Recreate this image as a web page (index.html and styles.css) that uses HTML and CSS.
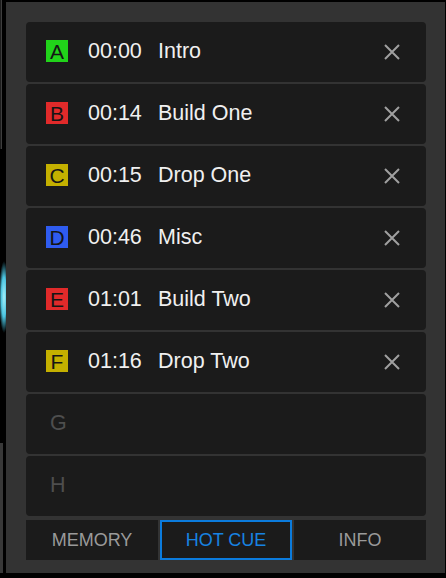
FILE: index.html
```html
<!DOCTYPE html>
<html lang="en">
<head>
  <meta charset="UTF-8">
  <meta name="viewport" content="width=device-width, initial-scale=1.0">
  <title>Hot Cues</title>
  <link rel="stylesheet" href="styles.css">
</head>
<body>
  <div class="stage">
    <div class="edge">
      <div class="edge-top"></div>
      <div class="edge-glow"></div>
      <div class="edge-bottom"></div>
    </div>

    <div class="panel">
      <div class="cue-list">
        <div class="cue">
          <span class="badge green">A</span>
          <span class="time">00:00</span>
          <span class="name">Intro</span>
          <svg class="remove" viewBox="0 0 16 16"><path d="M1 1L15 15M15 1L1 15"/></svg>
        </div>
        <div class="cue">
          <span class="badge red">B</span>
          <span class="time">00:14</span>
          <span class="name">Build One</span>
          <svg class="remove" viewBox="0 0 16 16"><path d="M1 1L15 15M15 1L1 15"/></svg>
        </div>
        <div class="cue">
          <span class="badge yellow">C</span>
          <span class="time">00:15</span>
          <span class="name">Drop One</span>
          <svg class="remove" viewBox="0 0 16 16"><path d="M1 1L15 15M15 1L1 15"/></svg>
        </div>
        <div class="cue">
          <span class="badge blue">D</span>
          <span class="time">00:46</span>
          <span class="name">Misc</span>
          <svg class="remove" viewBox="0 0 16 16"><path d="M1 1L15 15M15 1L1 15"/></svg>
        </div>
        <div class="cue">
          <span class="badge red">E</span>
          <span class="time">01:01</span>
          <span class="name">Build Two</span>
          <svg class="remove" viewBox="0 0 16 16"><path d="M1 1L15 15M15 1L1 15"/></svg>
        </div>
        <div class="cue">
          <span class="badge yellow">F</span>
          <span class="time">01:16</span>
          <span class="name">Drop Two</span>
          <svg class="remove" viewBox="0 0 16 16"><path d="M1 1L15 15M15 1L1 15"/></svg>
        </div>
        <div class="cue empty">
          <span class="slot">G</span>
        </div>
        <div class="cue empty">
          <span class="slot">H</span>
        </div>
      </div>

      <div class="tabs">
        <div class="tab">MEMORY</div>
        <div class="tab active">HOT CUE</div>
        <div class="tab">INFO</div>
      </div>
    </div>
  </div>
</body>
</html>
```

FILE: styles.css
```css
body {
  margin: 0;
  padding: 0;
  background-color: #000;
  font-family: "Liberation Sans", Arial, sans-serif;
  overflow: hidden;
}
.stage {
  display: flex;
  width: 446px;
  height: 578px;
}
.edge {
  width: 6px;
  display: flex;
  flex-direction: column;
}
.edge-top {
  width: 1px;
  height: 149px;
  border-left: 1px solid #1e1e1e;
  background-color: #3e3e3e;
}
.edge-glow {
  margin-top: 111px;
  height: 74px;
  width: 7px;
  background: radial-gradient(ellipse 5px 36px at 4px 50%, #a6f0fa 0%, #4cc4e0 55%, rgba(0, 0, 0, 0) 100%);
}
.edge-bottom {
  margin-top: 109px;
  width: 3px;
  height: 130px;
  background-color: #383838;
}
.panel {
  margin-top: 2px;
  width: 439px;
  height: 571px;
  box-sizing: border-box;
  padding: 20px 19px 13px 20px;
  background-color: #333;
}
.cue-list {
  display: flex;
  flex-direction: column;
  gap: 2px;
}
.cue {
  height: 60px;
  display: flex;
  align-items: center;
  padding: 0 26px 0 20px;
  background-color: #1b1b1b;
  border-radius: 4px;
  font-size: 21.5px;
  color: #f0f0f0;
}
.badge {
  width: 22px;
  height: 22px;
  line-height: 23px;
  margin-bottom: 2px;
  text-align: center;
  font-size: 21px;
  color: #151515;
}
.green { background-color: #21d31a; }
.red { background-color: #e12a2a; }
.yellow { background-color: #c4b000; }
.blue { background-color: #2f5cf0; }
.time {
  margin-left: 20px;
  margin-bottom: 2px;
  width: 70px;
}
.name {
  flex: 1;
  margin-bottom: 2px;
}
.remove {
  width: 16px;
  height: 16px;
  fill: none;
  stroke: #a0a0a0;
  stroke-width: 2;
}
.slot {
  margin-left: 4px;
  margin-bottom: 2px;
  color: #4e4e4e;
}
.tabs {
  display: grid;
  grid-template-columns: repeat(3, 1fr);
  gap: 2px;
  margin-top: 4px;
  height: 40px;
}
.tab {
  display: flex;
  align-items: center;
  justify-content: center;
  background-color: #1b1b1b;
  color: #9a9a9a;
  font-size: 18px;
}
.tab.active {
  border: 2px solid #0b7bdc;
  color: #1783e2;
}
```
